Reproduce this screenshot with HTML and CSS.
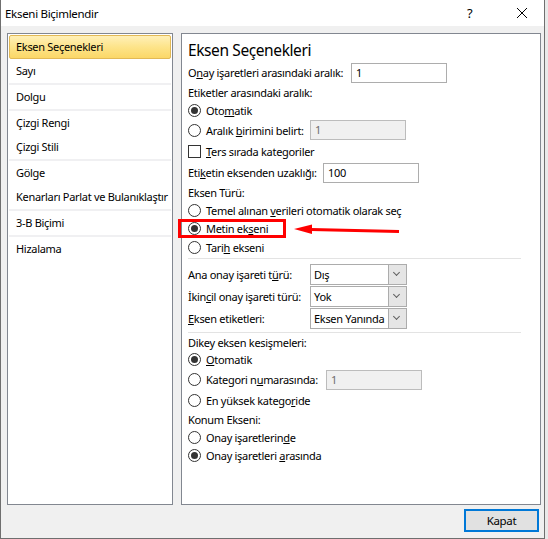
FILE: index.html
```html
<!DOCTYPE html>
<html lang="tr">
<head>
    <meta charset="UTF-8">
    <title>Ekseni Biçimlendir</title>
    <link rel="stylesheet" href="styles.css">
</head>
<body>
    <div class="window">
        <div class="titlebar">
            <span class="title">Ekseni Biçimlendir</span>
            <span class="help">?</span>
            <svg class="close" width="12" height="12" viewBox="0 0 12 12">
                <path d="M1 1 L11 11 M11 1 L1 11" stroke="#000" stroke-width="1" fill="none"/>
            </svg>
        </div>
        <div class="body">
            <div class="panels">
                <div class="nav">
                    <div class="nav-item selected">Eksen Seçenekleri</div>
                    <div class="nav-item">Sayı</div>
                    <div class="nav-sep"></div>
                    <div class="nav-item">Dolgu</div>
                    <div class="nav-sep"></div>
                    <div class="nav-item">Çizgi Rengi</div>
                    <div class="nav-item">Çizgi Stili</div>
                    <div class="nav-sep"></div>
                    <div class="nav-item">Gölge</div>
                    <div class="nav-item">Kenarları Parlat ve Bulanıklaştır</div>
                    <div class="nav-sep"></div>
                    <div class="nav-item">3-B Biçimi</div>
                    <div class="nav-sep"></div>
                    <div class="nav-item">Hizalama</div>
                </div>
                <div class="content">
                    <div class="heading">Eksen Seçenekleri</div>

                    <div class="row h21">
                        <span class="label w163">O<u>n</u>ay işaretleri arasındaki aralık:</span>
                        <span class="field">1</span>
                    </div>
                    <div class="row h18"><span>Etiketler arasındaki aralık:</span></div>
                    <div class="row h18">
                        <span class="radio on"></span><span>Oto<u>m</u>atik</span>
                    </div>
                    <div class="row h22">
                        <span class="radio"></span><span class="label w104">Aralık <u>b</u>irimini belirt:</span>
                        <span class="field disabled">1</span>
                    </div>
                    <div class="row h21">
                        <span class="check"></span><span><u>T</u>ers sırada kategoriler</span>
                    </div>
                    <div class="row h21">
                        <span class="label w135">Eti<u>k</u>etin eksenden uzaklığı:</span>
                        <span class="field">100</span>
                    </div>
                    <div class="row h19"><span>Eksen Türü:</span></div>
                    <div class="row h17">
                        <span class="radio"></span><span>Temel alınan <u>v</u>erileri otomatik olarak seç</span>
                    </div>
                    <div class="row h19">
                        <span class="radio on"></span><span>Metin ek<u>s</u>eni</span>
                    </div>
                    <div class="row h18">
                        <span class="radio"></span><span>Tari<u>h</u> ekseni</span>
                    </div>
                    <div class="sep s7"></div>
                    <div class="row h22">
                        <span class="label w122">Ana onay işareti t<u>ü</u>rü:</span>
                        <span class="select"><span class="value">Dış</span><span class="arrow"></span></span>
                    </div>
                    <div class="row h22">
                        <span class="label w122">İkin<u>c</u>il onay işareti türü:</span>
                        <span class="select"><span class="value">Yok</span><span class="arrow"></span></span>
                    </div>
                    <div class="row h23">
                        <span class="label w122"><u>E</u>ksen etiketleri:</span>
                        <span class="select"><span class="value">Eksen Yanında</span><span class="arrow"></span></span>
                    </div>
                    <div class="sep s4"></div>
                    <div class="row h17"><span>Dikey eksen kesişmeleri:</span></div>
                    <div class="row h17">
                        <span class="radio on"></span><span><u>O</u>tomatik</span>
                    </div>
                    <div class="row h23">
                        <span class="radio"></span><span class="label w120">Kategori n<u>u</u>marasında:</span>
                        <span class="field disabled">1</span>
                    </div>
                    <div class="row h19">
                        <span class="radio"></span><span>En yüksek katego<u>r</u>ide</span>
                    </div>
                    <div class="row h19"><span>Konum Ekseni:</span></div>
                    <div class="row h17">
                        <span class="radio"></span><span>Onay işaretlerin<u>d</u>e</span>
                    </div>
                    <div class="row h18">
                        <span class="radio on"></span><span>Onay işaretleri <u>a</u>rasında</span>
                    </div>

                    <!-- kırmızı işaret -->
                    <div class="mark-box"></div>
                    <svg class="mark-arrow" width="110" height="14" viewBox="0 0 110 14">
                        <path d="M17 6.5 L105 8.5" stroke="#f00" stroke-width="3" fill="none"/>
                        <path d="M0 6 L18 1.5 L18 11 Z" fill="#f00"/>
                    </svg>
                </div>
            </div>
            <div class="footer">
                <button class="btn">Kapat</button>
            </div>
        </div>
    </div>
</body>
</html>
```

FILE: styles.css
```css
body {
    margin: 0;
    background-color: #e9e9e9;
    font-family: "Noto Sans", "Open Sans", sans-serif;
    font-size: 11px;
    letter-spacing: -0.3px;
    color: #000;
}
.window {
    width: 543px;
    height: 538px;
    border: 1px solid #6f6f6f;
    border-top: none;
    background-color: #f0f0f0;
    display: flex;
    flex-direction: column;
}
.titlebar {
    height: 26px;
    background-color: #fff;
    display: flex;
    align-items: center;
    padding-left: 4px;
    font-size: 11.5px;
}
.title {
    flex: 1;
}
.help {
    width: 12px;
    margin-right: 37px;
    font-size: 13px;
}
.close {
    margin-right: 16px;
}
.body {
    flex: 1;
    display: flex;
    flex-direction: column;
    padding: 7px 3px 0 6px;
}
.panels {
    height: 472px;
    display: flex;
    gap: 8px;
}
.nav {
    width: 162px;
    border: 1px solid #828790;
    background-color: #fff;
    padding: 1px;
}
.nav-item {
    height: 24px;
    line-height: 24px;
    padding-left: 7px;
    white-space: nowrap;
}
.nav-item.selected {
    height: 22px;
    line-height: 22px;
    padding-left: 6px;
    border: 1px solid #e2b955;
    border-radius: 2px;
    background: linear-gradient(#fff0b8, #fde48a 50%, #fbd767);
}
.nav-sep {
    height: 2px;
    background-color: #f0f0f2;
}
.content {
    position: relative;
    width: 352px;
    border: 1px solid #828790;
    background-color: #fff;
    padding: 4px 0 0 6px;
}
.heading {
    height: 24px;
    line-height: 24px;
    font-size: 15.5px;
    letter-spacing: -0.4px;
}
.row {
    display: flex;
    align-items: center;
    white-space: nowrap;
}
.h17 { height: 17px; }
.h18 { height: 18px; }
.h19 { height: 19px; }
.h21 { height: 21px; }
.h22 { height: 22px; }
.h23 { height: 23px; }
.label {
    display: inline-block;
    flex-shrink: 0;
}
.w163 { width: 163px; }
.w135 { width: 135px; }
.w122 { width: 122px; }
.w120 { width: 120px; }
.w104 { width: 104px; }
.field {
    box-sizing: border-box;
    flex-shrink: 0;
    width: 96px;
    height: 20px;
    line-height: 18px;
    border: 1px solid #adadad;
    padding-left: 4px;
}
.field.disabled {
    background-color: #f0f0f0;
    border-color: #bcbcbc;
    color: #6d6d6d;
}
.radio {
    box-sizing: border-box;
    flex-shrink: 0;
    width: 13px;
    height: 13px;
    border: 1px solid #333;
    border-radius: 50%;
    margin-right: 5px;
    position: relative;
}
.radio.on::after {
    content: "";
    position: absolute;
    left: 2px;
    top: 2px;
    width: 7px;
    height: 7px;
    border-radius: 50%;
    background-color: #333;
}
.check {
    box-sizing: border-box;
    flex-shrink: 0;
    width: 13px;
    height: 13px;
    border: 1px solid #333;
    margin-right: 5px;
}
.sep {
    position: relative;
    width: 333px;
}
.s7 { height: 7px; }
.s4 { height: 4px; }
.sep::after {
    content: "";
    position: absolute;
    left: 0;
    right: 0;
    top: 2px;
    height: 1px;
    background-color: #e3e3e3;
}
.select {
    box-sizing: border-box;
    flex-shrink: 0;
    width: 97px;
    height: 21px;
    border: 1px solid #acacac;
    display: flex;
    background-color: #fff;
    overflow: hidden;
}
.select .value {
    flex: 1;
    padding-left: 3px;
    line-height: 19px;
    overflow: hidden;
}
.select .arrow {
    width: 17px;
    flex-shrink: 0;
    border-left: 1px solid #acacac;
    background-color: #e5e5e5;
    position: relative;
}
.select .arrow::after {
    content: "";
    position: absolute;
    left: 5px;
    top: 5px;
    width: 4px;
    height: 4px;
    border-right: 1px solid #606060;
    border-bottom: 1px solid #606060;
    transform: rotate(45deg);
}
.mark-box {
    position: absolute;
    left: -4px;
    top: 185px;
    width: 102px;
    height: 13px;
    border: 3px solid #f00;
}
.mark-arrow {
    position: absolute;
    left: 112px;
    top: 189px;
}
.footer {
    flex: 1;
    display: flex;
    justify-content: flex-end;
    align-items: flex-start;
    padding-top: 4px;
}
.btn {
    width: 75px;
    height: 23px;
    margin-right: 2px;
    border: 2px solid #0078d7;
    background-color: #e1e1e1;
    font-family: inherit;
    font-size: 11.5px;
    letter-spacing: -0.3px;
    padding: 0;
}
```
